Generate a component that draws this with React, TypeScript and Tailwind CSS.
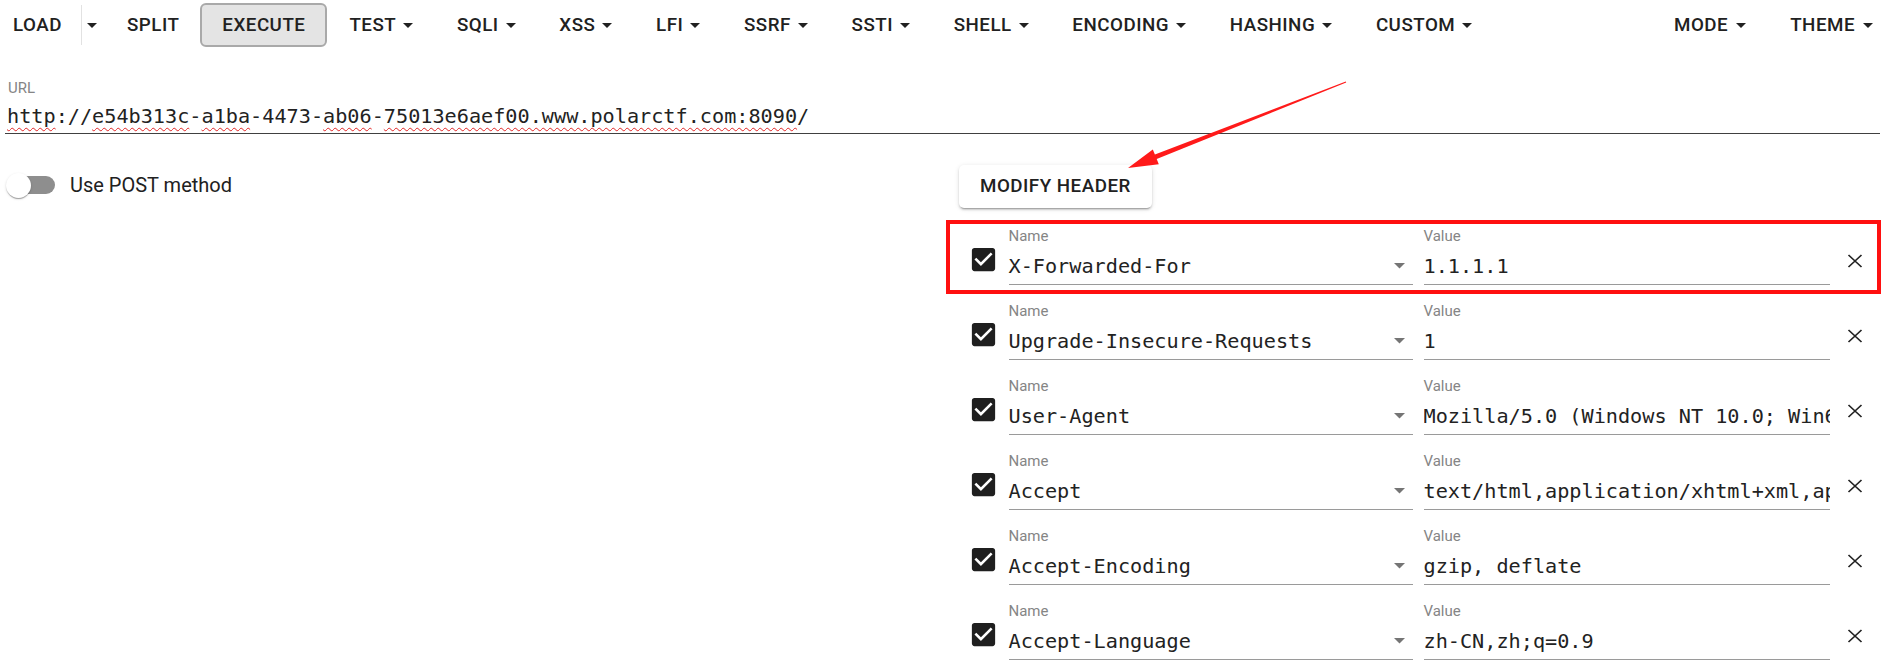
import React from "react";

const navItems = ["TEST", "SQLI", "XSS", "LFI", "SSRF", "SSTI", "SHELL", "ENCODING", "HASHING", "CUSTOM"];

const headers = [
  { name: "X-Forwarded-For", value: "1.1.1.1" },
  { name: "Upgrade-Insecure-Requests", value: "1" },
  {
    name: "User-Agent",
    value:
      "Mozilla/5.0 (Windows NT 10.0; Win64; x64) AppleWebKit/537.36 (KHTML, like Gecko) Chrome/120.0.0.0 Safari/537.36",
  },
  {
    name: "Accept",
    value:
      "text/html,application/xhtml+xml,application/xml;q=0.9,image/avif,image/webp,image/apng,*/*;q=0.8",
  },
  { name: "Accept-Encoding", value: "gzip, deflate" },
  { name: "Accept-Language", value: "zh-CN,zh;q=0.9" },
];

const DropArrow = ({ className }: { className: string }) => (
  <svg viewBox="7 10 10 5" className={className}>
    <path d="M7 10l5 5 5-5z" fill="currentColor" />
  </svg>
);

const CheckIcon = () => (
  <svg viewBox="0 0 24 24" className="w-[31px] h-[31px] shrink-0 text-[#1f1f1f]">
    <path
      fill="currentColor"
      d="M19 3H5c-1.11 0-2 .9-2 2v14c0 1.1.89 2 2 2h14c1.11 0 2-.9 2-2V5c0-1.1-.89-2-2-2zm-9 14l-5-5 1.41-1.41L10 14.17l7.59-7.59L19 8l-9 9z"
    />
  </svg>
);

const CloseIcon = () => (
  <svg viewBox="0 0 24 24" className="w-[24px] h-[24px] shrink-0 text-[#222]">
    <path d="M5.5 6L18.5 18M18.5 6L5.5 18" stroke="currentColor" strokeWidth="1.7" fill="none" />
  </svg>
);

const mono = "font-['DejaVu_Sans_Mono',monospace] text-[20.2px] leading-[28px] text-[#222]";
const squiggle = "underline decoration-wavy decoration-[#e02424] decoration-1 underline-offset-[4px]";

const HeaderRow = ({ name, value, marked }: { name: string; value: string; marked?: boolean }) => (
  <div className="relative h-[75px] flex items-start pl-[18px]">
    {marked && (
      <div className="absolute left-[-4px] top-[-2px] right-[18px] bottom-[3px] border-[4px] border-[#ff1010] pointer-events-none" />
    )}
    <div className="mt-[22px]">
      <CheckIcon />
    </div>
    <div className="ml-[10px] w-[404px] pt-[5px]">
      <div className="text-[15px] leading-[18px] text-[#858585]">Name</div>
      <div className="mt-[7px] flex items-center justify-between border-b border-[#9a9a9a] pb-[4px]">
        <span className={mono}>{name}</span>
        <DropArrow className="w-[11px] h-[5.5px] mr-[8px] text-[#757575]" />
      </div>
    </div>
    <div className="ml-[11px] w-[406px] pt-[5px]">
      <div className="text-[15px] leading-[18px] text-[#858585]">Value</div>
      <div className="mt-[7px] overflow-hidden whitespace-nowrap border-b border-[#9a9a9a] pb-[4px]">
        <span className={mono}>{value}</span>
      </div>
    </div>
    <div className="ml-[13px] mt-[27px]">
      <CloseIcon />
    </div>
  </div>
);

const App = () => {
  return (
    <div className="relative w-[1899px] h-[665px] overflow-hidden bg-white font-['Roboto',sans-serif] text-[#212121]">
      {/* top toolbar */}
      <div className="flex items-center py-[3px] pr-[4px] text-[18.75px] font-medium tracking-[0.5px]">
        <button className="h-[44px] pl-[13px] pr-[19px]">LOAD</button>
        <div className="w-px h-[40px] bg-[#e2e2e2]" />
        <button className="h-[44px] w-[24px] flex items-center justify-center pr-[3px]">
          <DropArrow className="w-[10px] h-[5px]" />
        </button>
        <button className="h-[44px] px-[21px]">SPLIT</button>
        <button className="h-[44px] px-[20px] border-2 border-[#a9a9a9] bg-[#e4e4e4] rounded-[6px]">EXECUTE</button>
        {navItems.map((item) => (
          <button key={item} className="h-[44px] pl-[22px] pr-[21.7px] flex items-center">
            {item}
            <DropArrow className="w-[10px] h-[5px] ml-[7px]" />
          </button>
        ))}
        <div className="ml-auto flex">
          {["MODE", "THEME"].map((item) => (
            <button key={item} className="h-[44px] px-[22px] flex items-center">
              {item}
              <DropArrow className="w-[10px] h-[5px] ml-[8px]" />
            </button>
          ))}
        </div>
      </div>

      {/* url field */}
      <div className="mt-[29px] pl-[5px] pr-[19px]">
        <div className="pl-[3px] text-[15px] leading-[18px] text-[#858585]">URL</div>
        <div className="mt-[5px] pl-[2px] pb-[3px] border-b border-[#404040] whitespace-nowrap">
          <span className={mono}>
            <span className={squiggle}>http</span>://<span className={squiggle}>e54b313c</span>-
            <span className={squiggle}>a1ba</span>-4473-<span className={squiggle}>ab06</span>-
            <span className={squiggle}>75013e6aef00.www.polarctf.com:8090</span>/
          </span>
        </div>
      </div>

      <div className="grid grid-cols-2">
        {/* left column */}
        <div className="mt-[37px] pl-[5px] flex items-center h-[28px]">
          <div className="relative w-[50px] h-[28px]">
            <div className="absolute left-[10px] right-0 top-[5px] h-[18px] rounded-full bg-[#8e8e8e]" />
            <div className="absolute left-[1px] top-[1.5px] w-[25px] h-[25px] rounded-full bg-white shadow-[0_2px_1px_-1px_rgba(0,0,0,0.2),0_1px_1px_0_rgba(0,0,0,0.14),0_1px_3px_0_rgba(0,0,0,0.12)]" />
          </div>
          <span className="ml-[15px] text-[20px] leading-[28px]">Use POST method</span>
        </div>

        {/* right column */}
        <div>
          <button className="mt-[31px] ml-[9.5px] h-[43px] px-[21px] rounded-[5px] bg-white text-[18.75px] font-medium tracking-[0.5px] shadow-[0_3px_1px_-2px_rgba(0,0,0,0.2),0_2px_2px_0_rgba(0,0,0,0.14),0_1px_5px_0_rgba(0,0,0,0.12)]">
            MODIFY HEADER
          </button>
          <div className="mt-[14px]">
            {headers.map((h, i) => (
              <HeaderRow key={h.name} name={h.name} value={h.value} marked={i === 0} />
            ))}
          </div>
        </div>
      </div>

      {/* annotation arrow */}
      <svg className="absolute left-0 top-0 pointer-events-none" width="1899" height="665">
        <polygon
          fill="#ff1a1a"
          points="1345.8,81.5 1154.9,154.5 1152.8,149.4 1128,168 1158.8,164.2 1156.7,159.1 1346.2,82.5"
        />
      </svg>
    </div>
  );
};

export default App;
